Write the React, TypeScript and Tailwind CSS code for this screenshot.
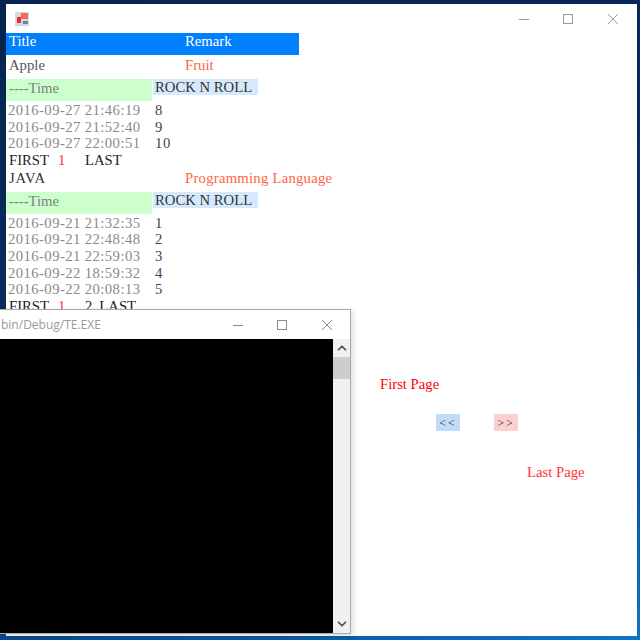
import { ChevronDown, ChevronUp } from 'lucide-react'

const firstRows = [
  ['2016-09-27 21:46:19', '8'],
  ['2016-09-27 21:52:40', '9'],
  ['2016-09-27 22:00:51', '10'],
]

const secondRows = [
  ['2016-09-21 21:32:35', '1'],
  ['2016-09-21 22:48:48', '2'],
  ['2016-09-21 22:59:03', '3'],
  ['2016-09-22 18:59:32', '4'],
  ['2016-09-22 20:08:13', '5'],
]

function WindowButtons({ stroke }: { stroke: string }) {
  return (
    <div className="flex items-center">
      <svg width="12" height="12" viewBox="0 0 12 12" fill="none" stroke={stroke}>
        <path d="M1 6.5h10" />
      </svg>
      <svg width="12" height="12" viewBox="0 0 12 12" fill="none" stroke={stroke} className="ml-[32px]">
        <rect x="1.5" y="1.5" width="9" height="9" />
      </svg>
      <svg width="12" height="12" viewBox="0 0 12 12" fill="none" stroke={stroke} className="ml-[33px]">
        <path d="M1 1l10 10M11 1L1 11" />
      </svg>
    </div>
  )
}

function TimeTable({ rows }: { rows: string[][] }) {
  return (
    <div>
      <div className="flex items-start">
        <div className="flex h-[22px] w-[146px] items-center bg-[#ccffcc] pb-[3px] pl-[3px] text-[#808080]">----Time</div>
        <div className="ml-px flex h-[16px] w-[105px] items-center whitespace-nowrap bg-[#d6e9fc] pl-[2px] text-[#333333]">ROCK N ROLL</div>
      </div>
      <div className="mt-px">
        {rows.map(([time, value]) => (
          <div key={time} className="flex h-[16.6px] items-center leading-none">
            <span className="w-[149px] pl-[2px] text-[#8a8a8a] tracking-[0.42px]">{time}</span>
            <span className="text-[#444444] tracking-[0.6px]">{value}</span>
          </div>
        ))}
      </div>
    </div>
  )
}

function Pager({ middle }: { middle?: string }) {
  return (
    <div className="flex h-[17px] items-center pl-[3px] leading-none text-[#222222]">
      <span>FIRST</span>
      <span className="ml-[9px] w-[27px] text-[#ff3333]">1</span>
      {middle && <span className="mr-[7px]">{middle}</span>}
      <span>LAST</span>
    </div>
  )
}

export default function App() {
  return (
    <div className="relative h-[640px] w-[640px] overflow-hidden bg-[linear-gradient(160deg,#06244f_0%,#0a2f62_55%,#0a5aa8_85%,#0f74c8_100%)] pl-[6px] pr-[3px] pt-[4px] pb-[4px] font-['Liberation_Serif',serif] text-[14.7px]">
      <div className="flex h-full flex-col bg-white">
        <div className="flex h-[29px] shrink-0 items-center justify-between pl-[9px] pr-[18px]">
          <svg width="14" height="14" viewBox="0 0 14 14">
            <rect width="14" height="14" fill="#d8d8d8" />
            <rect x="6" y="1" width="7" height="6" fill="#f26a5a" />
            <rect x="2" y="5" width="4" height="6" fill="#e8303a" />
            <rect x="8" y="9" width="5" height="3" fill="#5a86c8" />
          </svg>
          <WindowButtons stroke="#9a9a9a" />
        </div>
        <div className="flex min-h-0 flex-1">
          <div className="w-[334px] shrink-0">
            <div className="flex h-[22px] w-[293px] items-center bg-[#0080ff] pb-[5px] pl-[3px] text-white">
              <span className="w-[176px]">Title</span>
              <span>Remark</span>
            </div>
            <div className="flex h-[24px] items-center pb-[3px] pl-[3px] text-[#555555]">
              <span className="w-[176px]">Apple</span>
              <span className="text-[#ff6644]">Fruit</span>
            </div>
            <TimeTable rows={firstRows} />
            <Pager />
            <div className="flex h-[18px] items-center pl-[3px] text-[#333333]">
              <span className="w-[176px] tracking-[0.8px]">JAVA</span>
              <span className="whitespace-nowrap text-[#ff6644] tracking-[0.25px]">Programming Language</span>
            </div>
            <div className="mt-[5px]">
              <TimeTable rows={secondRows} />
            </div>
            <Pager middle="2" />
          </div>
          <div className="flex-1 pt-[342px]">
            <div className="ml-[40px] h-[18px] leading-[18px] text-[#ff0000]">First Page</div>
            <div className="ml-[96px] mt-[21px] flex gap-[34px] text-[12px] tracking-[2px] text-[#222222]">
              <div className="flex h-[17px] w-[24px] items-center justify-center bg-[#c2dcfc]">&lt;&lt;</div>
              <div className="flex h-[17px] w-[24px] items-center justify-center bg-[#fbd0cf]">&gt;&gt;</div>
            </div>
            <div className="ml-[187px] mt-[32px] h-[18px] leading-[18px] text-[#ff3333]">Last Page</div>
          </div>
        </div>
      </div>

      {/* console window sits over the form */}
      <div className="absolute left-[-20px] top-[309px] flex h-[325px] w-[371px] flex-col border border-[#a9a9a9] bg-white shadow-[2px_2px_6px_rgba(0,0,0,0.15)]">
        <div className="flex h-[29px] shrink-0 items-center justify-between pl-[20px] pr-[17px] font-['Open_Sans',sans-serif] text-[12px] text-[#9a9a9a]">
          <span>bin/Debug/TE.EXE</span>
          <WindowButtons stroke="#8a8a8a" />
        </div>
        <div className="flex min-h-0 flex-1">
          <div className="flex-1 bg-black" />
          <div className="flex w-[17px] flex-col items-center justify-between bg-[#f0f0f0] text-[#505050]">
            <div className="flex w-full flex-col items-center">
              <ChevronUp size={14} strokeWidth={3} className="my-[2px]" />
              <div className="h-[22px] w-full bg-[#cdcdcd]" />
            </div>
            <ChevronDown size={14} strokeWidth={3} className="my-[2px]" />
          </div>
        </div>
      </div>
    </div>
  )
}
